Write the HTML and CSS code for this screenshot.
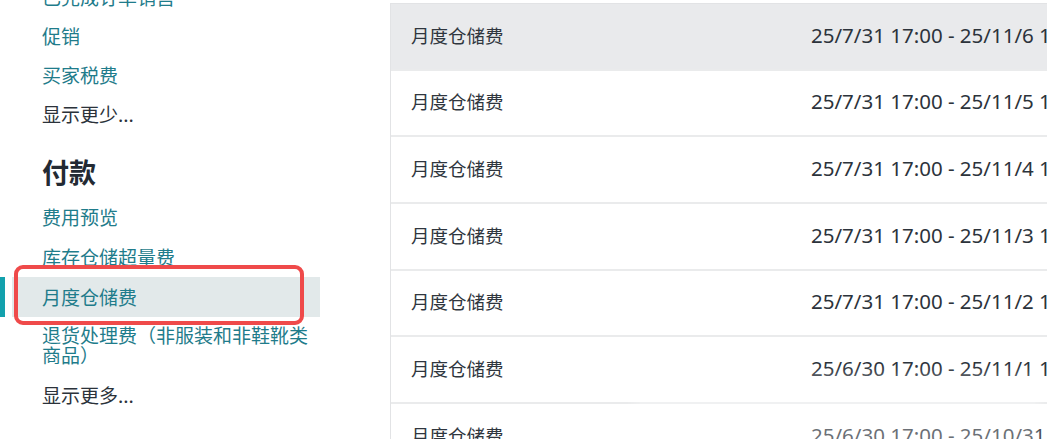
FILE: index.html
```html
<!DOCTYPE html>
<html lang="zh">
<head>
<meta charset="utf-8">
<link rel="stylesheet" href="styles.css">
</head>
<body>
<div class="page">
  <aside class="sidebar">
    <ul class="nav nav-first">
      <li class="link">已完成订单销售</li>
      <li class="link">促销</li>
      <li class="link">买家税费</li>
      <li class="more">显示更少...</li>
    </ul>
    <h2 class="heading">付款</h2>
    <ul class="nav">
      <li class="link">费用预览</li>
      <li class="link">库存仓储超量费</li>
      <li class="link selected">月度仓储费<span class="mark"></span></li>
      <li class="link after-selected">退货处理费（非服装和非鞋靴类商品）</li>
      <li class="more">显示更多...</li>
    </ul>
  </aside>
  <main class="main">
    <div class="table">
      <div class="row active"><span class="c-name">月度仓储费</span><span class="c-date">25/7/31 17:00 - 25/11/6 17:00</span></div>
      <div class="row"><span class="c-name">月度仓储费</span><span class="c-date">25/7/31 17:00 - 25/11/5 17:00</span></div>
      <div class="row"><span class="c-name">月度仓储费</span><span class="c-date">25/7/31 17:00 - 25/11/4 17:00</span></div>
      <div class="row"><span class="c-name">月度仓储费</span><span class="c-date">25/7/31 17:00 - 25/11/3 17:00</span></div>
      <div class="row"><span class="c-name">月度仓储费</span><span class="c-date">25/7/31 17:00 - 25/11/2 17:00</span></div>
      <div class="row"><span class="c-name">月度仓储费</span><span class="c-date">25/6/30 17:00 - 25/11/1 17:00</span></div>
      <div class="row"><span class="c-name">月度仓储费</span><span class="c-date">25/6/30 17:00 - 25/10/31 17:00</span></div>
    </div>
    <div class="haze"></div>
  </main>
</div>
</body>
</html>
```

FILE: styles.css
```css
html, body {
  margin: 0;
  padding: 0;
  background: #fff;
  overflow: hidden;
}
body {
  width: 1047px;
  height: 439px;
  font-family: "Noto Sans", "Noto Sans CJK SC", sans-serif;
}
.page {
  display: flex;
  align-items: flex-start;
  height: 439px;
  overflow: hidden;
}
.sidebar {
  width: 320px;
  flex: none;
  position: relative;
}
.nav {
  list-style: none;
  margin: 0;
  padding: 0;
}
.nav-first {
  margin-top: -22.5px;
}
.nav li {
  font-size: 19px;
  line-height: 20px;
  padding: 10px 0 10px 42px;
  font-family: "Noto Sans CJK SC", sans-serif;
}
.nav-first li {
  padding-top: 9.5px;
  padding-bottom: 9.5px;
}
.nav li.after-selected {
  padding-top: 8px;
}
.link {
  color: #1f7c8b;
}
.more {
  color: #2b323a;
}
.selected {
  position: relative;
  background: linear-gradient(to right, #13a1ad 0 5px, #fff 5px 12px, #e2e9ea 12px);
}
.mark {
  position: absolute;
  left: 14px;
  top: -12px;
  width: 290px;
  height: 60px;
  box-sizing: border-box;
  border: 4px solid #ef4a4a;
  border-radius: 9px;
}
.heading {
  margin: 22px 0 9px 42px;
  font-size: 27px;
  line-height: 32px;
  font-weight: 700;
  color: #232a33;
  font-family: "Noto Sans CJK SC", sans-serif;
}
.main {
  margin-left: 70px;
  flex: 1;
  position: relative;
  height: 439px;
}
.table {
  margin-top: 3px;
  width: 656px;
  border-left: 1px solid #e2e3e5;
  border-right: 1px solid #e2e3e5;
  border-top: 1px solid #e2e3e5;
}
.row {
  height: 66.67px;
  box-sizing: border-box;
  border-bottom: 2px solid #eaebec;
  padding-bottom: 3px;
  display: flex;
  align-items: center;
  color: #2f363e;
  font-size: 18.5px;
}
.row.active {
  background: #e9eaec;
}
.c-name {
  width: 400px;
  padding-left: 20px;
  flex: none;
  font-family: "Noto Sans CJK SC", sans-serif;
}
.c-date {
  white-space: nowrap;
  font-size: 20.5px;
  font-weight: 400;
  color: #2c333b;
  font-family: "Noto Sans", sans-serif;
}
.haze {
  position: absolute;
  left: 250px;
  top: 380px;
  width: 395px;
  height: 59px;
  background: rgba(255, 255, 255, 0.3);
  box-shadow: 0 0 12px 6px rgba(255, 255, 255, 0.3);
}
```
